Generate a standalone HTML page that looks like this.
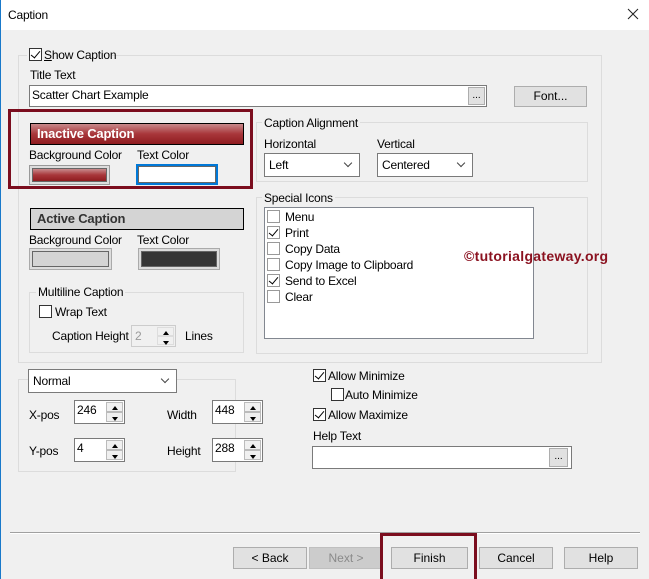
<!DOCTYPE html>
<html><head><style>
*{box-sizing:border-box;margin:0;padding:0}
body{width:649px;height:579px;background:#f0f0f0;font-family:"Liberation Sans",sans-serif;font-size:12px;color:#000;position:relative;overflow:hidden}
.a{position:absolute}
.t{position:absolute;white-space:nowrap;line-height:14px;letter-spacing:-0.2px}
.grp{position:absolute;border:1px solid #dcdcdc}
.lbl{position:absolute;background:#f0f0f0;padding:0 2px;white-space:nowrap;line-height:14px;letter-spacing:-0.2px}
.cb{position:absolute;width:13px;height:13px;border:1px solid #333;background:#fff}
.cb.g{border-color:#999}
.chk::after{content:"";position:absolute;left:3px;top:0px;width:4px;height:8px;border:solid #000;border-width:0 1.5px 1.5px 0;transform:rotate(40deg)}
.inp{position:absolute;background:#fff;border:1px solid #7a7a7a}
.btn{position:absolute;background:#e1e1e1;border:1px solid #adadad;text-align:center;line-height:20px}
.combo::after{content:"";position:absolute;right:8px;top:6px;width:5px;height:5px;border:solid #444;border-width:0 1px 1px 0;transform:rotate(45deg)}
.spin{position:absolute;right:1px;top:1px;width:17px;bottom:1px}
.spin div{height:50%;background:#f0f0f0;border:1px solid #bbb;position:relative}
.up::after{content:"";position:absolute;left:5px;top:3px;border:3px solid transparent;border-bottom:4px solid #000;border-top:0}
.dn::after{content:"";position:absolute;left:5px;top:4px;border:3px solid transparent;border-top:4px solid #000;border-bottom:0}
</style></head><body>
<div class="a" style="left:0;top:0;width:649px;height:30px;background:#fff"></div>
<div class="a" style="left:0;top:0;width:1px;height:579px;background:#1979ca"></div>
<div class="t" style="left:8px;top:8px;font-size:12px">Caption</div>
<svg class="a" style="left:627px;top:8px" width="12" height="12"><path d="M1 1L11 11M11 1L1 11" stroke="#222" stroke-width="1"/></svg>

<div class="grp" style="left:18px;top:55px;width:584px;height:308px"></div>
<div class="lbl" style="left:27px;top:48px;width:85px;height:14px"></div>
<div class="cb chk" style="left:29px;top:48px"></div>
<div class="t" style="left:44px;top:48px"><u>S</u>how Caption</div>
<div class="t" style="left:30px;top:68px">Title Text</div>
<div class="inp" style="left:29px;top:85px;width:458px;height:22px"></div>
<div class="t" style="left:32px;top:88px">Scatter Chart Example</div>
<div class="btn" style="left:468px;top:87px;width:17px;height:18px;line-height:16px;font-size:10px">...</div>
<div class="btn" style="left:514px;top:86px;width:73px;height:21px;line-height:19px">Font...</div>

<div class="a" style="left:8px;top:109px;width:245px;height:80px;border:3px solid #7b0d1e"></div>
<div class="a" style="left:30px;top:123px;width:214px;height:22px;border:1px solid #000;background:linear-gradient(#c88a8c,#a8363a 50%,#8f1c20)"></div>
<div class="t" style="left:37px;top:127px;color:#fff;font-weight:bold;font-size:13px">Inactive Caption</div>
<div class="t" style="left:29px;top:148px">Background Color</div>
<div class="t" style="left:137px;top:148px">Text Color</div>
<div class="a" style="left:29px;top:165px;width:81px;height:20px;border:1px solid #999;padding:2px;background:#ddd"><div style="width:100%;height:100%;border:1px solid #666;background:linear-gradient(#c88a8c,#a8363a 50%,#8f1c20)"></div></div>
<div class="a" style="left:136px;top:164px;width:82px;height:21px;border:2px solid #0078d7;background:#fff"><div style="width:100%;height:100%;border:1px solid #666"></div></div>

<div class="a" style="left:30px;top:208px;width:214px;height:22px;border:1px solid #000;background:#d4d4d4"></div>
<div class="t" style="left:37px;top:212px;color:#333;font-weight:bold;font-size:13px">Active Caption</div>
<div class="t" style="left:29px;top:233px">Background Color</div>
<div class="t" style="left:137px;top:233px">Text Color</div>
<div class="a" style="left:29px;top:248px;width:83px;height:22px;border:1px solid #aaa;padding:2px;background:#ddd"><div style="width:100%;height:100%;border:1px solid #666;background:#d4d4d4"></div></div>
<div class="a" style="left:138px;top:248px;width:82px;height:22px;border:1px solid #aaa;padding:2px;background:#ddd"><div style="width:100%;height:100%;border:1px solid #666;background:#363636"></div></div>

<div class="grp" style="left:29px;top:292px;width:215px;height:61px"></div>
<div class="lbl" style="left:36px;top:285px">Multiline Caption</div>
<div class="cb" style="left:39px;top:305px"></div>
<div class="t" style="left:55px;top:305px">Wrap Text</div>
<div class="t" style="left:52px;top:329px">Caption Height</div>
<div class="inp" style="left:131px;top:325px;width:45px;height:22px;border-color:#ccc;background:#f0f0f0"><span class="t" style="left:3px;top:3px;color:#999">2</span><div class="spin"><div class="up" style="border-color:#ddd"></div><div class="dn" style="border-color:#ddd"></div></div></div>
<div class="t" style="left:185px;top:329px">Lines</div>

<div class="grp" style="left:256px;top:122px;width:332px;height:60px"></div>
<div class="lbl" style="left:262px;top:116px">Caption Alignment</div>
<div class="t" style="left:264px;top:137px">Horizontal</div>
<div class="t" style="left:377px;top:137px">Vertical</div>
<div class="inp combo" style="left:264px;top:153px;width:96px;height:24px"><span class="t" style="left:4px;top:4px">Left</span></div>
<div class="inp combo" style="left:377px;top:153px;width:96px;height:24px"><span class="t" style="left:4px;top:4px">Centered</span></div>

<div class="grp" style="left:256px;top:197px;width:332px;height:157px"></div>
<div class="lbl" style="left:262px;top:191px">Special Icons</div>
<div class="inp" style="left:264px;top:207px;width:270px;height:132px;border-color:#828790"></div>
<div class="cb g" style="left:267px;top:210px"></div><div class="t" style="left:285px;top:210px">Menu</div>
<div class="cb g chk" style="left:267px;top:226px"></div><div class="t" style="left:285px;top:226px">Print</div>
<div class="cb g" style="left:267px;top:242px"></div><div class="t" style="left:285px;top:242px">Copy Data</div>
<div class="cb g" style="left:267px;top:258px"></div><div class="t" style="left:285px;top:258px">Copy Image to Clipboard</div>
<div class="cb g chk" style="left:267px;top:274px"></div><div class="t" style="left:285px;top:274px">Send to Excel</div>
<div class="cb g" style="left:267px;top:290px"></div><div class="t" style="left:285px;top:290px">Clear</div>
<div class="t" style="left:464px;top:249px;color:#8b1220;font-weight:bold;font-size:14px;letter-spacing:0.3px">©tutorialgateway.org</div>

<div class="grp" style="left:18px;top:379px;width:218px;height:93px"></div>
<div class="inp combo" style="left:28px;top:369px;width:149px;height:24px"><span class="t" style="left:4px;top:4px">Normal</span></div>
<div class="t" style="left:29px;top:408px">X-pos</div>
<div class="inp" style="left:74px;top:400px;width:51px;height:24px"><span class="t" style="left:2px;top:2px">246</span><div class="spin"><div class="up"></div><div class="dn"></div></div></div>
<div class="t" style="left:167px;top:408px">Width</div>
<div class="inp" style="left:212px;top:400px;width:51px;height:24px"><span class="t" style="left:2px;top:2px">448</span><div class="spin"><div class="up"></div><div class="dn"></div></div></div>
<div class="t" style="left:29px;top:444px">Y-pos</div>
<div class="inp" style="left:74px;top:438px;width:51px;height:24px"><span class="t" style="left:2px;top:2px">4</span><div class="spin"><div class="up"></div><div class="dn"></div></div></div>
<div class="t" style="left:167px;top:444px">Height</div>
<div class="inp" style="left:212px;top:438px;width:51px;height:24px"><span class="t" style="left:2px;top:2px">288</span><div class="spin"><div class="up"></div><div class="dn"></div></div></div>

<div class="cb chk" style="left:313px;top:369px"></div><div class="t" style="left:328px;top:369px">Allow Minimize</div>
<div class="cb" style="left:331px;top:388px"></div><div class="t" style="left:345px;top:388px">Auto Minimize</div>
<div class="cb chk" style="left:313px;top:408px"></div><div class="t" style="left:328px;top:408px">Allow Maximize</div>
<div class="t" style="left:313px;top:429px">Help Text</div>
<div class="inp" style="left:312px;top:446px;width:260px;height:23px"></div>
<div class="btn" style="left:549px;top:448px;width:19px;height:19px;line-height:16px;font-size:10px">...</div>

<div class="a" style="left:10px;top:532px;width:630px;height:1px;background:#a0a0a0"></div>
<div class="a" style="left:10px;top:533px;width:630px;height:1px;background:#fff"></div>
<div class="btn" style="left:233px;top:547px;width:74px;height:22px">&lt; Back</div>
<div class="btn" style="left:309px;top:547px;width:74px;height:22px;background:#ccc;border-color:#bfbfbf;color:#8a8a8a">Next &gt;</div>
<div class="btn" style="left:391px;top:547px;width:77px;height:22px">Finish</div>
<div class="a" style="left:380px;top:533px;width:97px;height:46px;border:3px solid #7b0d1e;border-bottom:none"></div>
<div class="btn" style="left:479px;top:547px;width:74px;height:22px">Cancel</div>
<div class="btn" style="left:564px;top:547px;width:74px;height:22px">Help</div>
</body></html>
